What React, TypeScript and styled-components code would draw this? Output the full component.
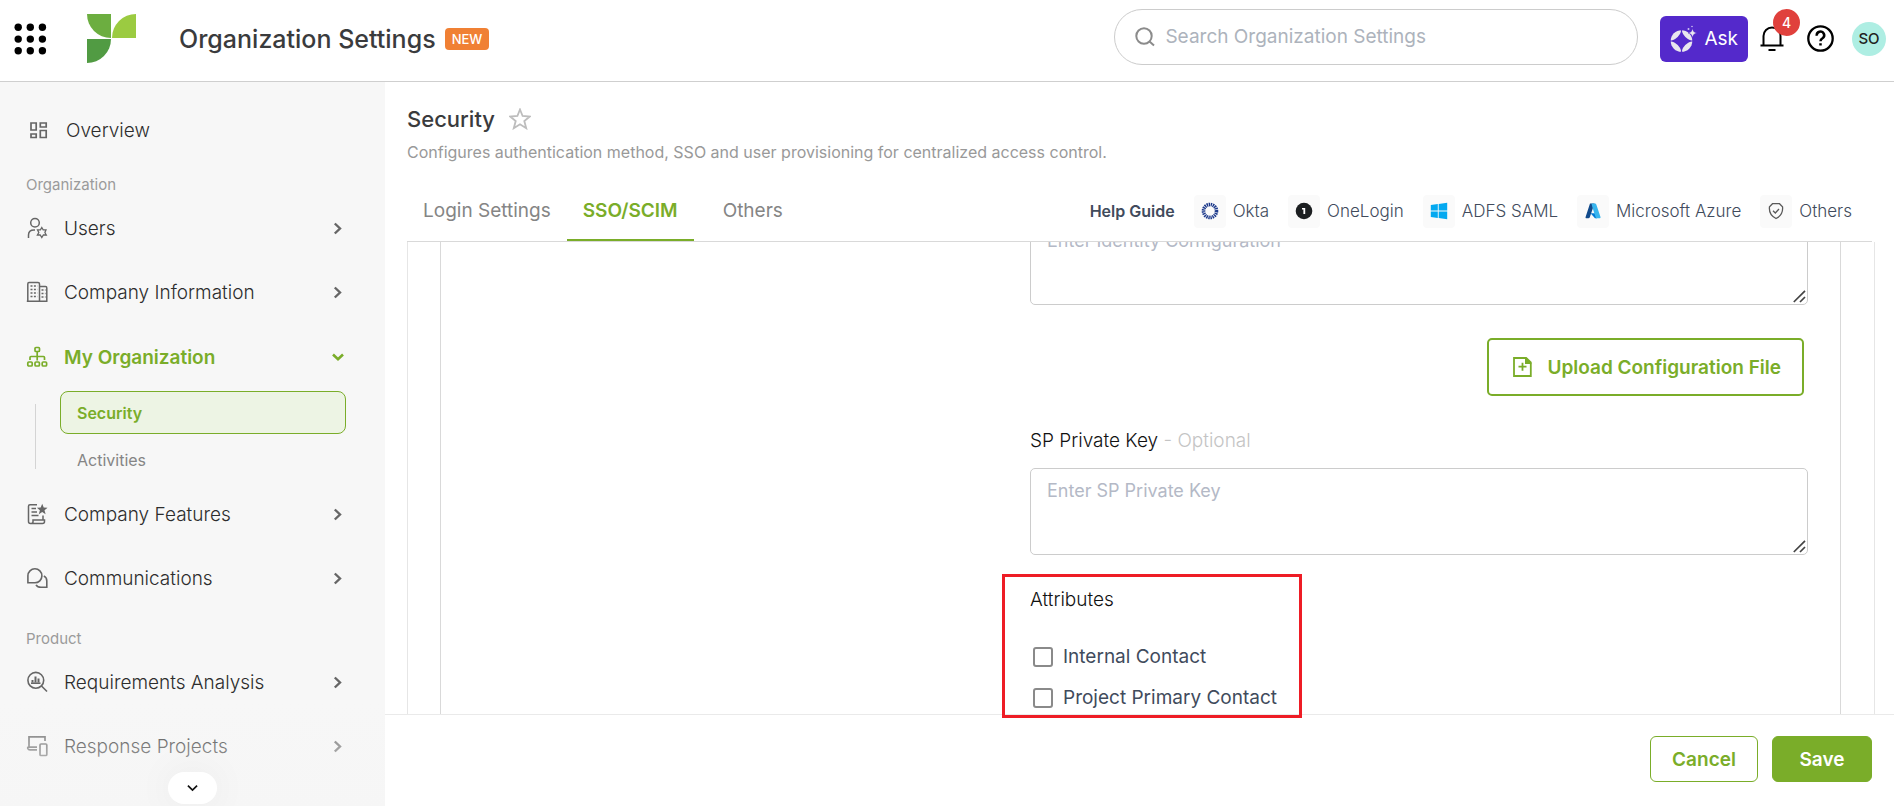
import React from "react";
import styled, { createGlobalStyle, css } from "styled-components";

const green = "#7aad29";
const ink = "#3a3b3d";
const slate = "#414b5c";
const line = "#d9d9d9";

const GlobalStyle = createGlobalStyle`
  *, *::before, *::after { box-sizing: border-box; }
  body { margin: 0; font-family: Inter, "Liberation Sans", sans-serif; color: ${ink}; background: #fff; }
  button, input, textarea { font-family: inherit; }
  button { cursor: pointer; }
  h1, h2, p, ul { margin: 0; padding: 0; }
  ul { list-style: none; }
  svg { display: block; flex: none; }
`;

const Page = styled.div`
  display: flex;
  flex-direction: column;
  height: 100vh;
  overflow: hidden;
`;

/* ---------- top bar ---------- */
const TopBar = styled.header`
  display: flex;
  align-items: center;
  flex: none;
  height: 82px;
  padding: 0 8px 4px 14px;
  border-bottom: 1px solid #cfcfcf;
`;
const PlainButton = styled.button`
  display: flex;
  padding: 0;
  border: 0;
  background: none;
  color: #000;
`;
const LogoLink = styled.a`
  margin: 0 43px 0 40px;
`;
const AppTitle = styled.h1`
  font-size: 25px;
  line-height: 32px;
  font-weight: 500;
  white-space: nowrap;
`;
const NewTag = styled.span`
  margin-left: 9px;
  padding: 0 7px;
  border-radius: 4px;
  background: #f08034;
  color: #fff;
  font-size: 13px;
  line-height: 22px;
  font-weight: 500;
`;
const SearchBox = styled.label`
  display: flex;
  align-items: center;
  gap: 10px;
  width: 524px;
  height: 56px;
  margin: 0 22px 4px auto;
  padding: 0 20px;
  border: 1px solid #ccc;
  border-radius: 28px;
  color: #8b8b8b;
`;
const SearchInput = styled.input`
  flex: 1;
  min-width: 0;
  padding: 0;
  border: 0;
  outline: 0;
  background: none;
  font-size: 19px;
  line-height: 24px;
  font-weight: 400;
  &::placeholder { color: #adb3bc; opacity: 1; }
`;
const AskButton = styled.button`
  display: flex;
  align-items: center;
  gap: 6px;
  height: 46px;
  padding: 0 10px;
  border: 0;
  border-radius: 6px;
  background: #5429cb;
  color: #fff;
  font-size: 19px;
  font-weight: 400;
`;
const BellButton = styled(PlainButton)`
  position: relative;
  margin: 0 23px 0 12px;
`;
const BellCount = styled.span`
  position: absolute;
  top: -17px;
  left: 13px;
  width: 27px;
  border-radius: 14px;
  background: #e0403c;
  color: #fff;
  font-size: 14px;
  line-height: 27px;
  font-weight: 500;
  text-align: center;
`;
const Avatar = styled.button`
  width: 34px;
  height: 34px;
  margin-left: 18px;
  padding: 0;
  border: 0;
  border-radius: 50%;
  background: #aeeee3;
  color: #222;
  font-size: 15px;
  font-weight: 500;
`;

/* ---------- side navigation ---------- */
const Body = styled.div`
  display: flex;
  flex: 1;
  min-height: 0;
`;
const Sidebar = styled.nav`
  position: relative;
  flex: none;
  width: 385px;
  padding-top: 16px;
  background: #f7f7f7;
  overflow: hidden;
`;
const NavRow = styled.a<{ $active?: boolean }>`
  display: flex;
  align-items: center;
  gap: 16px;
  height: 64px;
  padding: ${(p) => (p.$active ? "2px 41px 0 26px" : "0 42px 0 26px")};
  color: ${(p) => (p.$active ? green : "#2d2d2d")};
  font-size: 19px;
  font-weight: ${(p) => (p.$active ? 600 : 300)};
  text-decoration: none;
  svg { color: ${(p) => (p.$active ? green : "#666")}; }
`;
const NavText = styled.span`
  flex: 1;
`;
const NavHeading = styled.h2<{ $roomy?: boolean }>`
  padding: 12px 26px 0;
  margin-top: ${(p) => (p.$roomy ? 6 : 0)}px;
  color: #9b9b9b;
  font-size: 15px;
  line-height: 22px;
  font-weight: 400;
`;
const SubList = styled.ul`
  position: relative;
  padding: 3px 39px 1px 60px;
  &::before {
    content: "";
    position: absolute;
    left: 35px;
    top: 16px;
    bottom: 13px;
    width: 1px;
    background: #d4d4d4;
  }
`;
const SubLink = styled.a<{ $active?: boolean }>`
  display: flex;
  align-items: center;
  height: 43px;
  margin-bottom: ${(p) => (p.$active ? 4 : 0)}px;
  padding-left: 16px;
  border: 1px solid ${(p) => (p.$active ? green : "transparent")};
  border-radius: 8px;
  background: ${(p) => (p.$active ? "#edf4e4" : "transparent")};
  color: ${(p) => (p.$active ? green : "#858585")};
  font-size: 16px;
  font-weight: ${(p) => (p.$active ? 600 : 400)};
  text-decoration: none;
`;
const Fade = styled.div`
  position: absolute;
  left: 0;
  right: 0;
  bottom: 0;
  display: flex;
  justify-content: center;
  align-items: flex-end;
  height: 106px;
  padding-bottom: 2px;
  background: linear-gradient(rgba(247, 247, 247, 0), rgba(246, 246, 246, 0.9));
`;
const MoreButton = styled.button`
  display: flex;
  align-items: center;
  justify-content: center;
  width: 49px;
  height: 32px;
  padding: 0;
  border: 0;
  border-radius: 16px;
  background: #fff;
  color: #111;
  box-shadow: 0 0 40px rgba(0, 0, 0, 0.06);
`;

/* ---------- main column ---------- */
const Main = styled.main`
  display: flex;
  flex: 1;
  flex-direction: column;
  min-width: 0;
`;
const MainHead = styled.div`
  position: relative;
  z-index: 1;
  flex: none;
  padding: 21px 22px 0;
  background: #fff;
`;
const TitleRow = styled.div`
  display: flex;
  align-items: center;
  gap: 14px;
`;
const Title = styled.h2`
  font-size: 22px;
  line-height: 32px;
  font-weight: 500;
`;
const Description = styled.p`
  margin-top: 5px;
  color: #999;
  font-size: 16px;
  line-height: 24px;
`;
const TabBar = styled.div`
  display: flex;
  align-items: stretch;
  height: 60px;
  margin-top: 18px;
  border-bottom: 1px solid #d9d9d9;
`;
const Tab = styled.button<{ $active?: boolean }>`
  padding: 0 16px;
  margin-right: ${(p) => (p.$active ? 13 : 0)}px;
  border: 0;
  border-bottom: 2px solid ${(p) => (p.$active ? green : "transparent")};
  background: none;
  color: ${(p) => (p.$active ? green : "#858585")};
  font-size: 19px;
  font-weight: ${(p) => (p.$active ? 600 : 400)};
`;
const Guides = styled.div`
  display: flex;
  align-items: center;
  gap: 19px;
  margin-left: auto;
  padding: 0 20px 1px 0;
  color: ${slate};
  white-space: nowrap;
`;
const GuideTitle = styled.strong`
  font-size: 16px;
  font-weight: 600;
`;
const GuideLink = styled.a`
  display: flex;
  align-items: center;
  gap: 7px;
  color: inherit;
  font-size: 17px;
  font-weight: 300;
  text-decoration: none;
`;
const GuideIcon = styled.span`
  display: grid;
  place-items: center;
  width: 32px;
  height: 33px;
  border-radius: 4px;
  background: #fafafa;
`;

const OuterPanel = styled.div`
  flex: 1;
  min-height: 0;
  margin: 0 19px 0 22px;
  padding: 0 33px 0 32px;
  border: solid #e6e6e6;
  border-width: 0 1px;
`;
const InnerPanel = styled.div`
  display: grid;
  grid-template-columns: 589fr 778fr;
  height: 100%;
  padding-right: 32px;
  border: solid ${line};
  border-width: 0 1px;
`;
const Fields = styled.div`
  grid-column: 2;
  display: flex;
  flex-direction: column;
  margin-top: -24px;
`;
const AreaWrap = styled.div`
  position: relative;
  svg { position: absolute; right: 2px; bottom: 2px; }
`;
const Area = styled.textarea`
  display: block;
  width: 100%;
  height: 87px;
  padding: 10px 16px;
  border: 1px solid #ccc;
  border-radius: 5px;
  outline: 0;
  resize: none;
  color: ${ink};
  font-size: 18px;
  line-height: 24px;
  font-weight: 400;
  &::placeholder { color: #b4b9c6; opacity: 1; }
`;
const UploadButton = styled.button`
  display: flex;
  align-items: center;
  align-self: flex-end;
  gap: 15px;
  height: 58px;
  margin: 33px 4px 33px 0;
  padding: 0 21px 0 24px;
  border: 2px solid ${green};
  border-radius: 5px;
  background: #fff;
  color: ${green};
  font-size: 19px;
  font-weight: 600;
`;
const FieldLabel = styled.label`
  margin-bottom: 15px;
  color: #111;
  font-size: 19px;
  line-height: 24px;
  font-weight: 300;
  span { color: #c4c4c4; }
`;
const AttributesBox = styled.div`
  position: relative;
  margin-top: 33px;
  &::after {
    content: "";
    position: absolute;
    z-index: 3;
    top: -14px;
    left: -28px;
    width: 300px;
    height: 144px;
    border: 3px solid #ee1c25;
    pointer-events: none;
  }
`;
const Attributes = styled.fieldset`
  margin: 0;
  padding: 0;
  border: 0;
  min-width: 0;
`;
const Legend = styled.legend`
  padding: 0;
  margin-bottom: 24px;
  color: #111;
  font-size: 19px;
  line-height: 24px;
  font-weight: 300;
`;
const CheckRow = styled.label`
  display: flex;
  align-items: center;
  gap: 10px;
  height: 41px;
  padding-left: 3px;
  color: ${slate};
  font-size: 19px;
  font-weight: 400;
`;
const Checkbox = styled.input`
  appearance: none;
  width: 20px;
  height: 20px;
  margin: 0;
  border: 2px solid #8a8a8a;
  border-radius: 3px;
  background: #fff;
  &:checked { background: ${green}; border-color: ${green}; }
`;
const Footer = styled.footer`
  position: relative;
  z-index: 2;
  display: flex;
  flex: none;
  justify-content: flex-end;
  gap: 14px;
  height: 92px;
  padding: 21px 22px 0;
  border-top: 1px solid #eaeaea;
  background: #fff;
`;
const ActionButton = styled.button<{ $primary?: boolean }>`
  height: 46px;
  padding: 0 21px;
  border: 1px solid ${green};
  border-radius: 6px;
  font-size: 19px;
  font-weight: 600;
  ${(p) =>
    p.$primary
      ? css`min-width: 100px; background: ${green}; color: #fff;`
      : css`min-width: 108px; background: #fff; color: ${green};`}
`;

/* ---------- icons ---------- */
const stroke = { fill: "none", stroke: "currentColor", strokeWidth: 1.5 } as const;

const AppsIcon = () => (
  <svg width="33" height="32" viewBox="0 0 33 32">
    {[4.2, 16.3, 28.4].map((x) => [4.2, 16.1, 27.8].map((y) => <circle key={`${x}-${y}`} cx={x} cy={y} r="3.7" />))}
  </svg>
);
const Logo = () => (
  <svg width="49" height="49" viewBox="0 0 49 49">
    <path fill="#6cae40" d="M0 0H24V24A24 24 0 0 1 0 0Z" />
    <path fill="#9bcb41" d="M49 0V24H25A24 24 0 0 1 49 0Z" />
    <path fill="#519b43" d="M0 25H24A24 24 0 0 1 0 49Z" />
  </svg>
);
const SearchIcon = () => (
  <svg width="20" height="20" viewBox="0 0 20 20" {...stroke} strokeWidth="2">
    <circle cx="9" cy="9" r="7.7" /><path d="M14.5 14.5L19 18.5" />
  </svg>
);
const AskIcon = () => (
  <svg width="28" height="28" viewBox="0 0 28 28">
    <circle cx="11.5" cy="16" r="10.8" fill="#e9e6ee" />
    <path fill="#5429cb" d="M11.500 5.800Q14.200 13.300 21.700 16Q14.200 18.700 11.500 26.200Q8.800 18.700 1.300 16Q8.800 13.300 11.500 5.800Z" />
    <path stroke="#5429cb" strokeWidth="1.200" d="M11.500 4.500V9M11.500 23V27.500M0 16H4M19 16H23" />
    <path fill="#e9e6ee" stroke="#5429cb" strokeWidth=".5" d="M22.500 3.500Q23 7.500 27 8Q23 8.500 22.500 12.500Q22 8.500 18 8Q22 7.500 22.500 3.500Z" />
    <circle cx="18.500" cy="4" r="1" fill="#cfc3f2" /><circle cx="22" cy="1.500" r=".8" fill="#cfc3f2" />
  </svg>
);
const BellIcon = () => (
  <svg width="24" height="26" viewBox="0 0 24 26" fill="none" stroke="currentColor" strokeWidth="2">
    <path d="M.5 19.500H23.500M3.500 19.500V10A8.500 8.500 0 0 1 20.500 10V19.500M8.500 24H15.500" />
  </svg>
);
const HelpIcon = () => (
  <svg width="27" height="27" viewBox="0 0 27 27" fill="none" stroke="currentColor" strokeWidth="2.300">
    <circle cx="13.500" cy="13.500" r="12.200" />
    <path strokeWidth="2.500" d="M9.800 10.800A3.700 3.700 0 1 1 15.500 13.300Q13.500 14.500 13.500 16.200M13.500 18.200V20.600" />
  </svg>
);
const ChevronRight = () => (
  <svg width="10" height="13" viewBox="0 0 10 13" fill="none" stroke="currentColor" strokeWidth="2.400"><path d="M1.800 1.500L7 6.500L1.800 11.500" /></svg>
);
const ChevronDown = ({ small }: { small?: boolean }) => (
  <svg width={small ? 11 : 12} height="8" viewBox="0 0 12 8" fill="none" stroke="currentColor" strokeWidth={small ? 1.9 : 2.6}><path d="M1 1.500L6 6.200L11 1.500" /></svg>
);
const OverviewIcon = () => (
  <svg width="24" height="22" viewBox="0 0 24 22" {...stroke} strokeWidth="1.700">
    <path d="M5 4H10.200V11H5ZM14.300 4H20.200V8H14.300ZM5 15H10.200V18.500H5ZM14.300 11.500H20.200V18.500H14.300Z" />
  </svg>
);
const UsersIcon = () => (
  <svg width="22" height="22" viewBox="0 0 22 22" {...stroke}>
    <circle cx="9" cy="5.800" r="4.300" /><path d="M2.500 21V18Q2.500 13 8 13H9" />
    <path strokeWidth="1.300" d="M15.800 10.500L17.200 12.800L20 12.800L18.900 15.500L20.300 18H17.400L15.800 20.500L14.200 18H11.400L12.800 15.500L11.500 12.800H14.400Z" />
  </svg>
);
const CompanyIcon = () => (
  <svg width="22" height="22" viewBox="0 0 22 22" {...stroke}>
    <path d="M1.800 20V3Q1.800 1.500 3 1.500H12Q13.500 1.500 13.500 3V20M13.500 5.500H19.500Q20.800 5.500 20.800 7V20M.8 20.300H21.500" />
    <path strokeDasharray="2 1.400" d="M4.500 5H11.500M4.500 8.500H11.500M4.500 12H11.500M4.500 15.500H11.500M15.500 9H19.500M15.500 12.500H19.500M15.500 16H19.500" />
  </svg>
);
const TreeIcon = () => (
  <svg width="22" height="22" viewBox="0 0 22 22" {...stroke} strokeWidth="1.700">
    <rect x="9" y="1.500" width="4.500" height="4" rx="1" /><path d="M11.200 5.500V14.500M4 14V11.500Q4 10.500 5 10.500H17.500Q18.500 10.500 18.500 11.500V14" />
    <rect x="1.800" y="16" width="4.400" height="4" rx="1" /><rect x="9" y="16" width="4.400" height="4" rx="1" /><rect x="16.200" y="16" width="4.400" height="4" rx="1" />
  </svg>
);
const FeaturesIcon = () => (
  <svg width="22" height="22" viewBox="0 0 22 22" {...stroke}>
    <path d="M11 1.800H4Q2.500 1.800 2.500 3.300V18.500Q2.500 20.500 4.500 20.500H16.500Q18.500 20.500 18.500 18.500V17H7V19Q7 20.500 5 20.500M17 17V12.500M5.500 5.500H10M5.500 9H11M5.500 12.500H12.500" />
    <path fill="currentColor" stroke="none" d="M16.200 .8L17.700 4.600L21.500 4.800L18.500 7.300L19.600 11.200L16.200 9L12.800 11.200L13.900 7.300L10.900 4.800L14.700 4.600Z" />
  </svg>
);
const ChatIcon = () => (
  <svg width="22" height="22" viewBox="0 0 22 22" {...stroke} strokeWidth="1.600">
    <path d="M1.900 15.800V8.800A7 7 0 1 1 8.800 15.800ZM17.800 9Q20.800 10.200 20.800 14V20.300H15Q11.500 20.300 10 17.800" />
  </svg>
);
const AnalysisIcon = () => (
  <svg width="22" height="22" viewBox="0 0 22 22" {...stroke} strokeWidth="1.600">
    <circle cx="9.800" cy="9.300" r="7.900" /><path d="M15.500 15L21 20.500" /><path strokeWidth="2" d="M6.500 11.500V9M9.500 11.500V5.500M12.500 11.500V7.500" /><path d="M5 12.200H14.500" />
  </svg>
);
const DevicesIcon = () => (
  <svg width="22" height="22" viewBox="0 0 22 22" {...stroke} strokeWidth="1.700">
    <path d="M3 12V1.800H19V6M11 12.200H2.500Q1.500 12.200 1.800 13.500Q2.300 14.800 4 14.800H11" /><rect x="14" y="9" width="6.800" height="11.500" rx="1" />
  </svg>
);
const StarIcon = () => (
  <svg width="22" height="22" viewBox="0 0 22 22" fill="none" stroke="#bdbdbd" strokeWidth="1.800">
    <path d="M11 1.500L13.600 8L20.800 8.500L15.300 13.100L17.200 20.200L11 16.300L4.800 20.200L6.700 13.100L1.200 8.500L8.400 8Z" />
  </svg>
);
const OktaIcon = () => (
  <svg width="18" height="18" viewBox="0 0 18 18"><circle cx="9" cy="9" r="6.500" fill="none" stroke="#1d3a8c" strokeWidth="3.600" strokeDasharray="1.350 .69" /></svg>
);
const OneLoginIcon = () => (
  <svg width="18" height="18" viewBox="0 0 18 18">
    <circle cx="9" cy="9" r="8.300" fill="#1c1f21" /><path fill="#fff" d="M7 6H10.200V12H8.400V7.500H7Z" />
  </svg>
);
const WindowsIcon = () => (
  <svg width="18" height="18" viewBox="0 0 18 18" fill="#04a9f0"><path d="M.8 3L7.800 2V8.600H.8ZM8.700 1.900L17.200 .7V8.600H8.700ZM.8 9.500H7.800V16L.8 15ZM8.700 9.500H17.200V17.300L8.700 16.100Z" /></svg>
);
const AzureIcon = () => (
  <svg width="18" height="18" viewBox="0 0 18 18">
    <path fill="#114a8b" d="M6 1.500H10.500L5.800 15.200Q5.500 16.300 4.400 16.300H2.200Q1.200 16.300 1.600 15Z" />
    <path fill="#0078d4" d="M6.500 11.200H12.500L13 16.300H11Z" />
    <path fill="#37b5ee" d="M7.500 1.500H11Q12 1.500 12.300 2.500L16.500 15Q16.800 16.300 15.600 16.300H12L8.300 5Z" />
  </svg>
);
const ShieldIcon = () => (
  <svg width="18" height="18" viewBox="0 0 18 18" fill="none" stroke="#5a5a5a" strokeWidth="1.300">
    <path d="M5.500 1.700H12.500L15.500 4.700Q16.500 13 9 16.500Q1.500 13 2.500 4.700ZM6 8.800L8.300 11L12 7" />
  </svg>
);
const FileIcon = () => (
  <svg width="19" height="20" viewBox="0 0 19 20" fill="none" stroke="currentColor" strokeWidth="1.800">
    <path d="M12.500 1H1V19H17.800V6.500M9.500 5.700V13.700M5.500 9.700H13.500" /><path fill="currentColor" stroke="none" d="M12 0H13.500L18.700 5V7H12Z" />
  </svg>
);
const Grip = () => (
  <svg width="13" height="13" viewBox="0 0 13 13" stroke="#444" strokeWidth="1.700"><path d="M.8 12L12 .8M7 12L12 7" /></svg>
);

/* ---------- page ---------- */
type NavEntry = { text: string; icon: React.ReactNode };
const companyItems: NavEntry[] = [
  { text: "Users", icon: <UsersIcon /> },
  { text: "Company Information", icon: <CompanyIcon /> },
];
const featureItems: NavEntry[] = [
  { text: "Company Features", icon: <FeaturesIcon /> },
  { text: "Communications", icon: <ChatIcon /> },
];
const productItems: NavEntry[] = [
  { text: "Requirements Analysis", icon: <AnalysisIcon /> },
  { text: "Response Projects", icon: <DevicesIcon /> },
];
const guides: NavEntry[] = [
  { text: "Okta", icon: <OktaIcon /> },
  { text: "OneLogin", icon: <OneLoginIcon /> },
  { text: "ADFS SAML", icon: <WindowsIcon /> },
  { text: "Microsoft Azure", icon: <AzureIcon /> },
  { text: "Others", icon: <ShieldIcon /> },
];

const NavGroup = ({ items }: { items: NavEntry[] }) => (
  <>
    {items.map(({ text, icon }) => (
      <NavRow href="#" key={text}>{icon}<NavText>{text}</NavText><ChevronRight /></NavRow>
    ))}
  </>
);

export default function App() {
  return (
    <Page>
      <GlobalStyle />
      <TopBar>
        <PlainButton aria-label="Apps"><AppsIcon /></PlainButton>
        <LogoLink href="#" aria-label="Home"><Logo /></LogoLink>
        <AppTitle>Organization Settings</AppTitle>
        <NewTag>NEW</NewTag>
        <SearchBox>
          <SearchIcon />
          <SearchInput type="search" aria-label="Search" placeholder="Search Organization Settings" />
        </SearchBox>
        <AskButton><AskIcon />Ask</AskButton>
        <BellButton aria-label="Notifications"><BellIcon /><BellCount>4</BellCount></BellButton>
        <PlainButton aria-label="Help"><HelpIcon /></PlainButton>
        <Avatar>SO</Avatar>
      </TopBar>
      <Body>
        <Sidebar>
          <NavRow href="#"><OverviewIcon /><NavText>Overview</NavText></NavRow>
          <NavHeading>Organization</NavHeading>
          <NavGroup items={companyItems} />
          <NavRow href="#" $active><TreeIcon /><NavText>My Organization</NavText><ChevronDown /></NavRow>
          <SubList>
            <li><SubLink href="#" $active>Security</SubLink></li>
            <li><SubLink href="#">Activities</SubLink></li>
          </SubList>
          <NavGroup items={featureItems} />
          <NavHeading $roomy>Product</NavHeading>
          <NavGroup items={productItems} />
          <Fade><MoreButton aria-label="Show more"><ChevronDown small /></MoreButton></Fade>
        </Sidebar>
        <Main>
          <MainHead>
            <TitleRow>
              <Title>Security</Title>
              <PlainButton aria-label="Add to favourites"><StarIcon /></PlainButton>
            </TitleRow>
            <Description>Configures authentication method, SSO and user provisioning for centralized access control.</Description>
            <TabBar>
              <Tab>Login Settings</Tab>
              <Tab $active>SSO/SCIM</Tab>
              <Tab>Others</Tab>
              <Guides>
                <GuideTitle>Help Guide</GuideTitle>
                {guides.map(({ text, icon }) => (
                  <GuideLink href="#" key={text}><GuideIcon>{icon}</GuideIcon>{text}</GuideLink>
                ))}
              </Guides>
            </TabBar>
          </MainHead>
          <OuterPanel>
            <InnerPanel>
              <Fields>
                <AreaWrap>
                  <Area aria-label="Identity Configuration" placeholder="Enter Identity Configuration" /><Grip />
                </AreaWrap>
                <UploadButton><FileIcon />Upload Configuration File</UploadButton>
                <FieldLabel htmlFor="sp-key">SP Private Key <span>- Optional</span></FieldLabel>
                <AreaWrap>
                  <Area id="sp-key" placeholder="Enter SP Private Key" /><Grip />
                </AreaWrap>
                <AttributesBox>
                  <Attributes>
                    <Legend>Attributes</Legend>
                    <CheckRow><Checkbox type="checkbox" />Internal Contact</CheckRow>
                    <CheckRow><Checkbox type="checkbox" />Project Primary Contact</CheckRow>
                  </Attributes>
                </AttributesBox>
              </Fields>
            </InnerPanel>
          </OuterPanel>
          <Footer>
            <ActionButton>Cancel</ActionButton>
            <ActionButton $primary>Save</ActionButton>
          </Footer>
        </Main>
      </Body>
    </Page>
  );
}
